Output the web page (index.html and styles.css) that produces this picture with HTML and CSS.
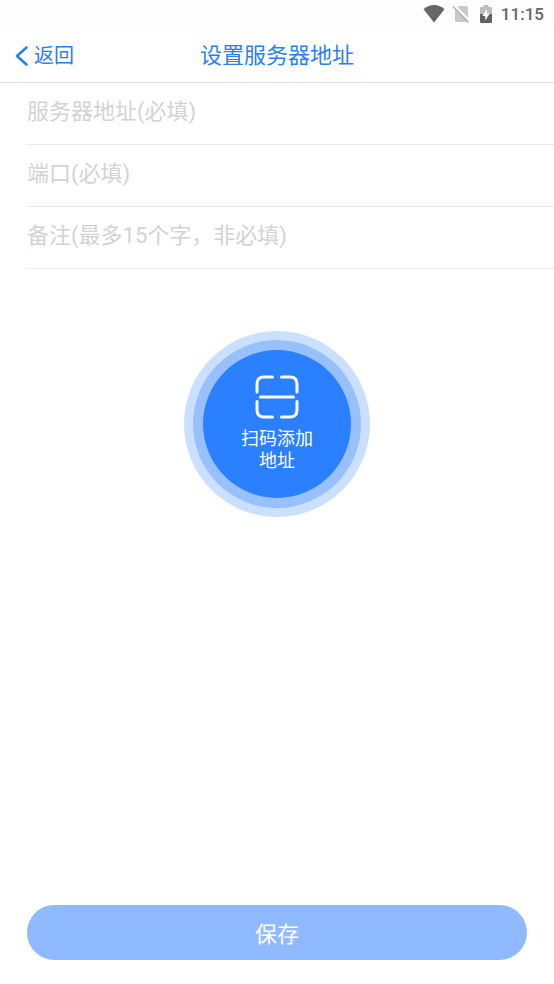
FILE: index.html
```html
<!DOCTYPE html>
<html lang="zh-CN">
<head>
<meta charset="utf-8">
<meta name="viewport" content="width=device-width, initial-scale=1">
<title>设置服务器地址</title>
<link rel="stylesheet" href="styles.css">
</head>
<body>
<div class="status-bar">
  <svg class="wifi" width="22" height="18" viewBox="0 0 22 18" aria-hidden="true">
    <path fill="#666" d="M0.5 4.2Q11-4 21.500 4.200L11 17.500Z"/>
  </svg>
  <svg class="sim" width="18" height="18" viewBox="0 0 18 18" aria-hidden="true">
    <path fill="#c9c9c9" d="M7 1h7.500Q16 1 16 2.500V17H4.500Q3 17 3 15.500V5Z"/>
    <path stroke="#fdfdfd" stroke-width="2" d="M2.500 0.500 18 16"/>
    <path stroke="#b5b5b5" stroke-width="1.600" d="M1 1.500 16.500 17.500"/>
  </svg>
  <svg class="battery" width="12" height="18" viewBox="0 0 12 18" aria-hidden="true">
    <path fill="#bdbdbd" d="M0 9V3.200Q0 2 1.200 2H3.500V0H8.500V2H10.800Q12 2 12 3.200V9Z"/>
    <path fill="#626262" d="M0 9H12V16.800Q12 18 10.800 18H1.200Q0 18 0 16.800Z"/>
    <path fill="#fff" d="M7 4 2.300 11H5.200V15.500L9.800 8.500H7Z"/>
  </svg>
  <span class="clock">11:15</span>
</div>
<header class="nav">
  <a class="back" href="#">
    <svg width="13" height="20" viewBox="0 0 13 20" aria-hidden="true">
      <path fill="none" stroke="#2d7ff0" stroke-width="2.600" stroke-linecap="round" stroke-linejoin="round" d="M11.500 1.500 2 10l9.500 8.500"/>
    </svg>
    <span>返回</span>
  </a>
  <h1 class="title">设置服务器地址</h1>
</header>
<form class="page">
  <div class="fields">
    <input class="field" type="text" aria-label="服务器地址" placeholder="服务器地址(必填)">
    <input class="field" type="text" aria-label="端口" placeholder="端口(必填)">
    <input class="field" type="text" aria-label="备注" placeholder="备注(最多15个字，非必填)">
  </div>
  <button class="scan" type="button">
    <svg width="44" height="44" viewBox="0 0 44 44" fill="none" stroke="#fff" stroke-width="3" stroke-linecap="round" aria-hidden="true">
      <path d="M17.500 2H9Q2 2 2 9v8M26.500 2H35Q42 2 42 9v8M2 26.500V35Q2 42 9 42h8.500M42 26.500V35Q42 42 35 42h-8.500M5.500 22h33"/>
    </svg>
    <span class="scan-label">扫码添加<br>地址</span>
  </button>
  <button class="save" type="submit">保存</button>
</form>
</body>
</html>
```

FILE: styles.css
```css
* {
  box-sizing: border-box;
}

body {
  display: flex;
  flex-direction: column;
  min-height: 100vh;
  margin: 0;
  background: #fff;
  font-family: Roboto, "Noto Sans CJK SC", sans-serif;
}

button,
input {
  border: 0;
  font-family: inherit;
}

.status-bar {
  display: flex;
  align-items: center;
  justify-content: flex-end;
  height: 28px;
  padding: 0 10px;
  background: #fdfdfd;
}

.sim {
  margin-left: 7px;
}

.battery {
  margin-left: 10px;
}

.clock {
  margin-left: 9px;
  color: #666;
  font-size: 17px;
  font-weight: 500;
  line-height: 28px;
}

.nav {
  display: grid;
  grid-template-columns: 1fr auto 1fr;
  align-items: center;
  height: 55px;
  padding-top: 2px;
  border-bottom: 1px solid #e0e0e0;
  color: #2d7ff0;
}

.back {
  display: flex;
  align-items: center;
  gap: 6px;
  padding-left: 15px;
  color: inherit;
  font-size: 20px;
  line-height: 28px;
  text-decoration: none;
}

.title {
  margin: 0;
  font-size: 22px;
  font-weight: 400;
  line-height: 32px;
}

.page {
  display: flex;
  flex: 1;
  flex-direction: column;
  align-items: center;
}

.fields {
  align-self: stretch;
  padding-left: 27px;
}

.field {
  display: block;
  width: 100%;
  height: 62px;
  padding: 0 0 4px;
  border-bottom: 1px solid #ebebeb;
  border-radius: 0;
  outline: 0;
  background: transparent;
  color: #333;
  font-size: 22px;
}

.field::placeholder {
  color: #d3d3d3;
  opacity: 1;
}

.scan {
  display: flex;
  flex-direction: column;
  align-items: center;
  gap: 9px;
  width: 148px;
  height: 148px;
  margin-top: 81px;
  padding: 25px 0 0;
  border-radius: 50%;
  background: #2a80ff;
  box-shadow: 0 0 0 10px #98c0ff, 0 0 0 19px #cbdfff;
  color: #fff;
}

.scan-label {
  font-size: 18px;
  line-height: 22px;
}

.save {
  align-self: stretch;
  height: 55px;
  margin: auto 27px 24px;
  padding: 0 0 2px;
  border-radius: 28px;
  background: #8fbaff;
  color: #fff;
  font-size: 22px;
}
```
